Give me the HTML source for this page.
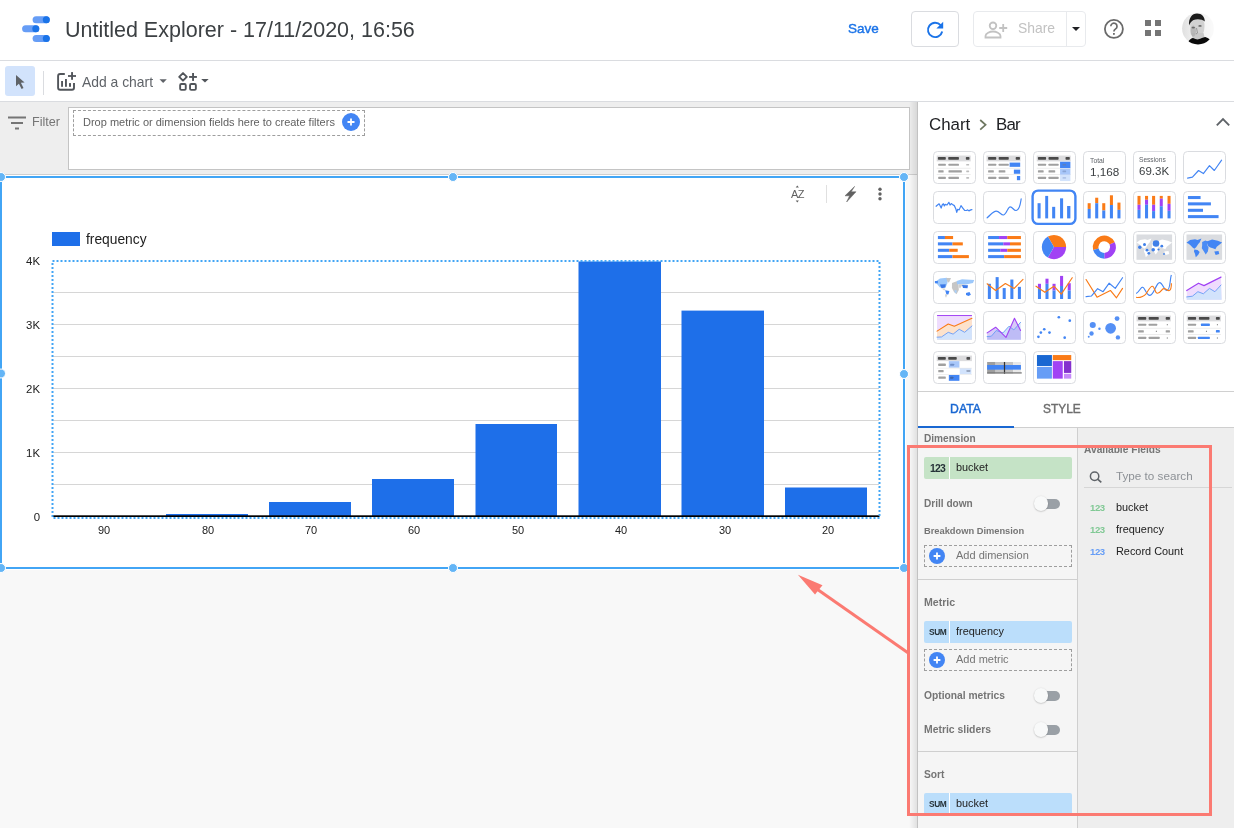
<!DOCTYPE html>
<html><head><meta charset="utf-8">
<style>
*{margin:0;padding:0;box-sizing:border-box}
html,body{width:1234px;height:828px;overflow:hidden;background:#fff;font-family:"Liberation Sans",sans-serif;position:relative}
.a{position:absolute}
.t{position:absolute;line-height:1;white-space:nowrap;will-change:transform}
.b{font-weight:bold}
svg{position:absolute;overflow:visible}
</style></head><body>
<!-- HEADER -->
<div class="a" style="left:0;top:60px;width:1234px;height:1px;background:#dadce0"></div>
<svg style="left:0;top:0" width="60" height="60">
  <rect x="32.6" y="16.2" width="17.2" height="7" rx="3.5" fill="#669df6"/><circle cx="46.3" cy="19.7" r="3.5" fill="#1a73e8"/>
  <rect x="22.1" y="25.2" width="17.2" height="7" rx="3.5" fill="#669df6"/><circle cx="35.8" cy="28.7" r="3.5" fill="#1a73e8"/>
  <rect x="32.6" y="34.9" width="17.2" height="7" rx="3.5" fill="#669df6"/><circle cx="46.3" cy="38.4" r="3.5" fill="#1a73e8"/>
</svg>
<div class="t" style="left:65px;top:19.5px;font-size:21.5px;color:#3c4043">Untitled Explorer - 17/11/2020, 16:56</div>

<div class="t" style="left:847.8px;top:22.4px;font-size:13.5px;color:#1a73e8;-webkit-text-stroke:0.4px #1a73e8">Save</div>
<div class="a" style="left:911px;top:11px;width:48px;height:36px;border:1px solid #dadce0;border-radius:4px"></div>
<svg style="left:0;top:0" width="1" height="1">
  <path d="M940.6 25.2 A7.2 7.2 0 1 0 942.2 31.5" fill="none" stroke="#1a73e8" stroke-width="1.9"/>
  <path d="M943.2 21.8 L943.2 28.6 L936.4 28.6 Z" fill="#1a73e8"/>
</svg>
<div class="a" style="left:973px;top:11px;width:113px;height:36px;border:1px solid #e8eaed;border-radius:4px"></div>
<div class="a" style="left:1066px;top:12px;width:1px;height:34.5px;background:#e8eaed"></div>
<svg style="left:0;top:0" width="1" height="1">
  <circle cx="993" cy="25.8" r="3.3" fill="none" stroke="#c2c2c2" stroke-width="1.8"/>
  <path d="M985.5 37.5 v-1.5 c0-2.8 4.5-4.5 7.5-4.5 s7.5 1.7 7.5 4.5 v1.5 z" fill="none" stroke="#c2c2c2" stroke-width="1.8"/>
  <path d="M1003.2 24v8 M999.2 28h8" stroke="#c2c2c2" stroke-width="1.8"/>
</svg>
<div class="t" style="left:1018px;top:22px;font-size:13.9px;color:#c2c2c2">Share</div>
<svg style="left:0;top:0" width="1" height="1"><path d="M1072 27 h8 l-4 4 z" fill="#202124"/></svg>
<svg style="left:0;top:0" width="1" height="1">
  <circle cx="1113.9" cy="28.9" r="9" fill="none" stroke="#6a6a6a" stroke-width="1.8"/>
  <path d="M1110.8 26.3 a3.1 3.1 0 1 1 4.8 2.6 c-1.2 0.8 -1.7 1.4 -1.7 2.6" fill="none" stroke="#6a6a6a" stroke-width="1.7"/>
  <rect x="1113" y="33" width="1.8" height="1.8" fill="#6a6a6a"/>
</svg>
<svg style="left:0;top:0" width="1" height="1" fill="#757575">
  <rect x="1145" y="20" width="6" height="6"/><rect x="1155" y="20" width="6" height="6"/>
  <rect x="1145" y="30" width="6" height="6"/><rect x="1155" y="30" width="6" height="6"/>
</svg>
<!-- avatar -->
<svg style="left:0;top:0" width="1" height="1">
  <defs><clipPath id="av"><circle cx="1198" cy="28.6" r="15.9"/></clipPath>
  <linearGradient id="avg" x1="0" x2="1"><stop offset="0" stop-color="#dcdcdc"/><stop offset="0.35" stop-color="#efefef"/><stop offset="1" stop-color="#fbfbfb"/></linearGradient></defs>
  <g clip-path="url(#av)">
    <rect x="1180" y="11" width="36" height="36" fill="url(#avg)"/>
    <path d="M1190,24 C1190,20 1194,18.5 1198,18.5 C1202,18.5 1204.5,21 1204.5,25 C1204.5,31 1203,36 1199,38.5 C1196,39.5 1192,37 1191,33 Z" fill="#d2d2d2"/>
    <path d="M1191.5 33 L1193 40 L1205 39 L1203.5 33 Z" fill="#c9c9c9"/><ellipse cx="1193.2" cy="31" rx="2.8" ry="5.5" fill="#9a9a9a" opacity="0.45"/>
    <ellipse cx="1193.3" cy="27.6" rx="1.7" ry="0.9" fill="#6a6a6a"/>
    <ellipse cx="1200" cy="25.9" rx="1.7" ry="0.9" fill="#6a6a6a"/>
    <path d="M1196.5 28 L1197.5 33 L1196 34" fill="none" stroke="#8a8a8a" stroke-width="0.8"/>
    <path d="M1189,25.5 C1188.5,18 1192,13.5 1197,13.5 C1202,13.5 1204.8,17 1204.8,21.5 C1202,19 1197,18.6 1193.5,20 C1191.5,21 1190,23 1189,25.5 Z" fill="#1c1c1c"/>
    <path d="M1185,47 L1188.3,41.4 C1190,39.5 1191.5,38.2 1193,38 C1195,39 1197,39.6 1198.3,39.3 C1201,38.8 1203,37.5 1205.2,37.1 C1207,37.6 1208.5,38.4 1209.6,39.3 L1215,47 Z" fill="#0a0a0a"/>
  </g>
</svg>

<!-- TOOLBAR -->
<div class="a" style="left:0;top:101px;width:1234px;height:1px;background:#dadce0"></div>
<div class="a" style="left:5px;top:66px;width:30px;height:30px;background:#d2e3fc;border-radius:3px"></div>
<svg style="left:0;top:0" width="1" height="1"><path d="M16 75 L16 86.3 L18.9 83.7 L21.6 89 L23.5 88 L20.9 82.8 L24.6 82.6 Z" fill="#5f6368"/></svg>
<div class="a" style="left:43px;top:71px;width:1px;height:24px;background:#dadce0"></div>
<svg style="left:0;top:0" width="1" height="1">
  <path d="M64.8 74 H60.1 a2 2 0 0 0 -2 2 V87.7 a2 2 0 0 0 2 2 H72 a2 2 0 0 0 2 -2 V83.1" fill="none" stroke="#51555a" stroke-width="1.9"/>
  <g fill="#51555a"><rect x="61.1" y="81" width="1.9" height="5.8"/><rect x="65" y="79" width="1.9" height="7.8"/><rect x="69" y="83.1" width="2" height="3.7"/>
  <rect x="71.1" y="72.1" width="1.9" height="7.7"/><rect x="68" y="75.1" width="8" height="1.8"/></g>
</svg>
<div class="t" style="left:82.4px;top:76.1px;font-size:13.9px;color:#5f6368">Add a chart</div>
<svg style="left:0;top:0" width="1" height="1"><path d="M159.5 79.3 h7.3 l-3.65 3.6 z" fill="#5f6368"/></svg>
<svg style="left:0;top:0" width="1" height="1">
  <path d="M183 73.1 L186.8 76.9 L183 80.7 L179.2 76.9 Z" fill="none" stroke="#51555a" stroke-width="1.9" stroke-linejoin="round"/>
  <rect x="180.15" y="84.05" width="5.6" height="5.8" rx="1.2" fill="none" stroke="#51555a" stroke-width="1.9"/>
  <rect x="190.05" y="84.05" width="5.8" height="5.8" rx="1.2" fill="none" stroke="#51555a" stroke-width="1.9"/>
  <g fill="#51555a"><rect x="192.1" y="73" width="1.9" height="7.9"/><rect x="189.1" y="76" width="7.8" height="1.9"/></g>
</svg>
<svg style="left:0;top:0" width="1" height="1"><path d="M201.2 79 h7.5 l-3.75 3.6 z" fill="#51555a"/></svg>

<!-- CANVAS -->
<div class="a" style="left:0;top:102px;width:918px;height:726px;background:#f8f8f8"></div>
<!-- FILTER BAR -->
<div class="a" style="left:0;top:102px;width:918px;height:72px;background:#eeeeee"></div>
<div class="a" style="left:0;top:174px;width:918px;height:1px;background:#cfcfcf"></div>


<svg style="left:0;top:0" width="1" height="1" fill="#757575">
  <rect x="8" y="116.5" width="18" height="2"/><rect x="11" y="122" width="12" height="2"/><rect x="15" y="127.5" width="4" height="2"/>
</svg>
<div class="t" style="left:31.6px;top:116px;font-size:12.6px;color:#757575">Filter</div>
<div class="a" style="left:68px;top:107px;width:842px;height:63px;background:#fff;border:1px solid #c4c4c4"></div>
<div class="a" style="left:73px;top:110px;width:292px;height:26px;border:1px dashed #9e9e9e"></div>
<div class="t" style="left:82.5px;top:116.7px;font-size:11px;color:#616161">Drop metric or dimension fields here to create filters</div>
<svg style="left:0;top:0" width="1" height="1">
  <circle cx="351" cy="122" r="9" fill="#4285f4"/>
  <path d="M351 118.5v7 M347.5 122h7" stroke="#fff" stroke-width="1.8"/>
</svg>
<!-- scroll shadow -->
<div class="a" style="left:909px;top:102px;width:8px;height:726px;background:linear-gradient(to right,rgba(0,0,0,0),rgba(0,0,0,0.09))"></div>

<!-- CHART -->
<div class="a" style="left:0;top:175px;width:906px;height:394.5px;background:#fff"></div>
<!-- gridlines -->
<svg style="left:0;top:0" width="1" height="1">
  <g stroke="#d6d6d6" stroke-width="1">
    <path d="M53 292.5H879 M53 324.5H879 M53 356.5H879 M53 388.5H879 M53 420.5H879 M53 452.5H879 M53 484.5H879"/>
  </g>
  <g fill="#1e6fe9">
    <rect x="166" y="514" width="82" height="2"/>
    <rect x="269" y="502" width="82" height="14"/>
    <rect x="372" y="479" width="82" height="37"/>
    <rect x="475.5" y="424" width="81.5" height="92"/>
    <rect x="578.5" y="261.5" width="82.5" height="254.5"/>
    <rect x="681.5" y="310.6" width="82.5" height="205.4"/>
    <rect x="785" y="487.5" width="82" height="28.5"/>
  </g>
  <rect x="52.5" y="515.3" width="827" height="1.7" fill="#000"/>
  <g stroke="#42a5f5" stroke-width="2" stroke-dasharray="2 2" fill="none">
    <path d="M52.5 261H879.5 V518 H52.5 Z"/>
  </g>
</svg>
<div class="a" style="left:52px;top:232px;width:28px;height:14px;background:#1e6fe9"></div>
<div class="t" style="left:85.6px;top:233px;font-size:13.8px;color:#212121">frequency</div>
<div class="t" style="left:0;width:40px;text-align:right;top:256px;font-size:11.4px;color:#212121">4K</div>
<div class="t" style="left:0;width:40px;text-align:right;top:320px;font-size:11.4px;color:#212121">3K</div>
<div class="t" style="left:0;width:40px;text-align:right;top:384px;font-size:11.4px;color:#212121">2K</div>
<div class="t" style="left:0;width:40px;text-align:right;top:448px;font-size:11.4px;color:#212121">1K</div>
<div class="t" style="left:0;width:40px;text-align:right;top:512.3px;font-size:11.4px;color:#212121">0</div>
<div class="t" style="left:74.2px;width:60px;text-align:center;top:524.8px;font-size:11px;color:#212121">90</div>
<div class="t" style="left:177.6px;width:60px;text-align:center;top:524.8px;font-size:11px;color:#212121">80</div>
<div class="t" style="left:281.0px;width:60px;text-align:center;top:524.8px;font-size:11px;color:#212121">70</div>
<div class="t" style="left:384.4px;width:60px;text-align:center;top:524.8px;font-size:11px;color:#212121">60</div>
<div class="t" style="left:487.8px;width:60px;text-align:center;top:524.8px;font-size:11px;color:#212121">50</div>
<div class="t" style="left:591.2px;width:60px;text-align:center;top:524.8px;font-size:11px;color:#212121">40</div>
<div class="t" style="left:694.6px;width:60px;text-align:center;top:524.8px;font-size:11px;color:#212121">30</div>
<div class="t" style="left:798.0px;width:60px;text-align:center;top:524.8px;font-size:11px;color:#212121">20</div>

<!-- chart toolbar -->
<div class="t" style="left:790.6px;top:189px;font-size:11px;letter-spacing:-0.6px;color:#616161">AZ</div>
<svg style="left:0;top:0" width="1" height="1" fill="#616161">
  <path d="M797.3 185.6 l1.6 1.9 h-3.2 z M797.3 202.4 l1.6 -1.9 h-3.2 z"/>
</svg>
<div class="a" style="left:825.5px;top:185px;width:1px;height:18px;background:#e0e0e0"></div>
<svg style="left:0;top:0" width="1" height="1" fill="#616161">
  <path d="M854.6 186.4 L845 195.8 H849.6 L846.6 202 L856 191.8 H851.2 Z" stroke="#616161" stroke-width="0.5" stroke-linejoin="round"/>
  <circle cx="880" cy="189.2" r="1.7"/><circle cx="880" cy="194" r="1.7"/><circle cx="880" cy="198.8" r="1.7"/>
</svg>
<!-- frame -->
<svg style="left:0;top:0" width="1" height="1">
  <g fill="#42a5f5">
    <rect x="0" y="176" width="905" height="2"/>
    <rect x="0" y="567" width="905" height="2"/>
    <rect x="0" y="176" width="2" height="393"/>
    <rect x="903" y="176" width="2" height="393"/>
  </g>
  <g fill="#64b5f6" stroke="#fff" stroke-width="1">
    <circle cx="1" cy="177" r="4.5"/><circle cx="453" cy="177" r="4.5"/><circle cx="904" cy="177" r="4.5"/>
    <circle cx="1" cy="373.5" r="4.5"/><circle cx="904" cy="374" r="4.5"/>
    <circle cx="1" cy="568" r="4.5"/><circle cx="453" cy="568" r="4.5"/><circle cx="904" cy="568" r="4.5"/>
  </g>
</svg>

<!-- PANEL START -->
<div class="a" style="left:918px;top:102px;width:316px;height:326px;background:#fff"></div>
<div class="a" style="left:917px;top:102px;width:1px;height:726px;background:#c2c2c2"></div>
<div class="t" style="left:928.8px;top:117px;font-size:16.9px;color:#202124">Chart</div>
<svg style="left:0;top:0" width="1" height="1"><path d="M980.2 120 L985.6 124.8 L980.2 129.6" fill="none" stroke="#6d7660" stroke-width="1.7"/></svg>
<div class="t" style="left:995.9px;top:117px;font-size:16.9px;letter-spacing:-0.8px;color:#202124">Bar</div>
<svg style="left:0;top:0" width="1" height="1"><path d="M1216.8 125.4 L1223 119.2 L1229.2 125.4" fill="none" stroke="#5f6368" stroke-width="1.9"/></svg>
<svg style="left:0;top:0" width="1" height="1"><rect x="933.5" y="151.5" width="42" height="32" rx="4" fill="#fff" stroke="#dadce0" stroke-width="1"/><rect x="983.5" y="151.5" width="42" height="32" rx="4" fill="#fff" stroke="#dadce0" stroke-width="1"/><rect x="1033.5" y="151.5" width="42" height="32" rx="4" fill="#fff" stroke="#dadce0" stroke-width="1"/><rect x="1083.5" y="151.5" width="42" height="32" rx="4" fill="#fff" stroke="#dadce0" stroke-width="1"/><rect x="1133.5" y="151.5" width="42" height="32" rx="4" fill="#fff" stroke="#dadce0" stroke-width="1"/><rect x="1183.5" y="151.5" width="42" height="32" rx="4" fill="#fff" stroke="#dadce0" stroke-width="1"/><rect x="933.5" y="191.5" width="42" height="32" rx="4" fill="#fff" stroke="#dadce0" stroke-width="1"/><rect x="983.5" y="191.5" width="42" height="32" rx="4" fill="#fff" stroke="#dadce0" stroke-width="1"/><rect x="1083.5" y="191.5" width="42" height="32" rx="4" fill="#fff" stroke="#dadce0" stroke-width="1"/><rect x="1133.5" y="191.5" width="42" height="32" rx="4" fill="#fff" stroke="#dadce0" stroke-width="1"/><rect x="1183.5" y="191.5" width="42" height="32" rx="4" fill="#fff" stroke="#dadce0" stroke-width="1"/><rect x="933.5" y="231.5" width="42" height="32" rx="4" fill="#fff" stroke="#dadce0" stroke-width="1"/><rect x="983.5" y="231.5" width="42" height="32" rx="4" fill="#fff" stroke="#dadce0" stroke-width="1"/><rect x="1033.5" y="231.5" width="42" height="32" rx="4" fill="#fff" stroke="#dadce0" stroke-width="1"/><rect x="1083.5" y="231.5" width="42" height="32" rx="4" fill="#fff" stroke="#dadce0" stroke-width="1"/><rect x="1133.5" y="231.5" width="42" height="32" rx="4" fill="#fff" stroke="#dadce0" stroke-width="1"/><rect x="1183.5" y="231.5" width="42" height="32" rx="4" fill="#fff" stroke="#dadce0" stroke-width="1"/><rect x="933.5" y="271.5" width="42" height="32" rx="4" fill="#fff" stroke="#dadce0" stroke-width="1"/><rect x="983.5" y="271.5" width="42" height="32" rx="4" fill="#fff" stroke="#dadce0" stroke-width="1"/><rect x="1033.5" y="271.5" width="42" height="32" rx="4" fill="#fff" stroke="#dadce0" stroke-width="1"/><rect x="1083.5" y="271.5" width="42" height="32" rx="4" fill="#fff" stroke="#dadce0" stroke-width="1"/><rect x="1133.5" y="271.5" width="42" height="32" rx="4" fill="#fff" stroke="#dadce0" stroke-width="1"/><rect x="1183.5" y="271.5" width="42" height="32" rx="4" fill="#fff" stroke="#dadce0" stroke-width="1"/><rect x="933.5" y="311.5" width="42" height="32" rx="4" fill="#fff" stroke="#dadce0" stroke-width="1"/><rect x="983.5" y="311.5" width="42" height="32" rx="4" fill="#fff" stroke="#dadce0" stroke-width="1"/><rect x="1033.5" y="311.5" width="42" height="32" rx="4" fill="#fff" stroke="#dadce0" stroke-width="1"/><rect x="1083.5" y="311.5" width="42" height="32" rx="4" fill="#fff" stroke="#dadce0" stroke-width="1"/><rect x="1133.5" y="311.5" width="42" height="32" rx="4" fill="#fff" stroke="#dadce0" stroke-width="1"/><rect x="1183.5" y="311.5" width="42" height="32" rx="4" fill="#fff" stroke="#dadce0" stroke-width="1"/><rect x="933.5" y="351.5" width="42" height="32" rx="4" fill="#fff" stroke="#dadce0" stroke-width="1"/><rect x="983.5" y="351.5" width="42" height="32" rx="4" fill="#fff" stroke="#dadce0" stroke-width="1"/><rect x="1033.5" y="351.5" width="42" height="32" rx="4" fill="#fff" stroke="#dadce0" stroke-width="1"/><rect x="1032.6" y="190.6" width="42.8" height="33.3" rx="5.5" fill="#fff" stroke="#4285f4" stroke-width="2.4"/><g transform="translate(930 148) scale(0.12155)"><rect x="55" y="62" width="280" height="48" fill="#dcdcde" rx="0"/><rect x="65" y="74.0" width="65" height="22.0" fill="#4a4a4a" rx="5.5"/><rect x="150" y="74.0" width="88" height="22.0" fill="#4a4a4a" rx="5.5"/><rect x="295" y="74.0" width="30" height="22.0" fill="#4a4a4a" rx="5.5"/><rect x="68" y="129.0" width="62" height="18.0" fill="#a0a0a0" rx="4.5"/><rect x="152" y="129.0" width="86" height="18.0" fill="#a0a0a0" rx="4.5"/><rect x="298" y="131.0" width="24" height="14.0" fill="#bdbdbd" rx="3.5"/><rect x="68" y="183.0" width="44" height="18.0" fill="#a0a0a0" rx="4.5"/><rect x="152" y="183.0" width="110" height="18.0" fill="#a0a0a0" rx="4.5"/><rect x="298" y="185.0" width="24" height="14.0" fill="#bdbdbd" rx="3.5"/><rect x="68" y="237.0" width="62" height="18.0" fill="#a0a0a0" rx="4.5"/><rect x="152" y="237.0" width="86" height="18.0" fill="#a0a0a0" rx="4.5"/><rect x="298" y="239.0" width="24" height="14.0" fill="#bdbdbd" rx="3.5"/><rect x="55" y="163" width="280" height="6" fill="#e6e6e6" rx="0"/><rect x="55" y="216" width="280" height="6" fill="#e6e6e6" rx="0"/><rect x="465" y="62" width="280" height="48" fill="#dcdcde" rx="0"/><rect x="478" y="74.0" width="67" height="22.0" fill="#4a4a4a" rx="5.5"/><rect x="565" y="74.0" width="83" height="22.0" fill="#4a4a4a" rx="5.5"/><rect x="705" y="74.0" width="35" height="22.0" fill="#4a4a4a" rx="5.5"/><rect x="478" y="129.0" width="67" height="18.0" fill="#a0a0a0" rx="4.5"/><rect x="565" y="129.0" width="83" height="18.0" fill="#a0a0a0" rx="4.5"/><rect x="478" y="183.0" width="47" height="18.0" fill="#a0a0a0" rx="4.5"/><rect x="565" y="183.0" width="55" height="18.0" fill="#a0a0a0" rx="4.5"/><rect x="478" y="237.0" width="67" height="18.0" fill="#a0a0a0" rx="4.5"/><rect x="565" y="237.0" width="83" height="18.0" fill="#a0a0a0" rx="4.5"/><rect x="465" y="163" width="280" height="6" fill="#e6e6e6" rx="0"/><rect x="465" y="216" width="280" height="6" fill="#e6e6e6" rx="0"/><rect x="655" y="120" width="87" height="35" fill="#4285f4" rx="0"/><rect x="690" y="178" width="52" height="34" fill="#4285f4" rx="0"/><rect x="715" y="230" width="27" height="35" fill="#4285f4" rx="0"/><rect x="878" y="62" width="280" height="48" fill="#dcdcde" rx="0"/><rect x="888" y="74.0" width="67" height="22.0" fill="#4a4a4a" rx="5.5"/><rect x="975" y="74.0" width="83" height="22.0" fill="#4a4a4a" rx="5.5"/><rect x="1115" y="74.0" width="35" height="22.0" fill="#4a4a4a" rx="5.5"/><rect x="888" y="129.0" width="67" height="18.0" fill="#a0a0a0" rx="4.5"/><rect x="975" y="129.0" width="83" height="18.0" fill="#a0a0a0" rx="4.5"/><rect x="888" y="183.0" width="47" height="18.0" fill="#a0a0a0" rx="4.5"/><rect x="975" y="183.0" width="55" height="18.0" fill="#a0a0a0" rx="4.5"/><rect x="888" y="237.0" width="67" height="18.0" fill="#a0a0a0" rx="4.5"/><rect x="975" y="237.0" width="83" height="18.0" fill="#a0a0a0" rx="4.5"/><rect x="878" y="163" width="280" height="6" fill="#e6e6e6" rx="0"/><rect x="878" y="216" width="280" height="6" fill="#e6e6e6" rx="0"/><rect x="1070" y="113" width="85" height="52" fill="#4285f4" rx="0"/><rect x="1070" y="170" width="85" height="50" fill="#a8c7fa" rx="0"/><rect x="1070" y="222" width="85" height="50" fill="#d2e3fc" rx="0"/><rect x="1090" y="131.0" width="30" height="14.0" fill="#5a7fc0" rx="3.5"/><rect x="1090" y="185.0" width="30" height="14.0" fill="#8aa6d6" rx="3.5"/><rect x="1090" y="239.0" width="30" height="14.0" fill="#b0c4e8" rx="3.5"/></g><g transform="translate(1080 148) scale(0.12155)"><polyline points="885,248 925,240 975,185 1015,210 1065,145 1105,185 1165,100" fill="none" stroke="#4285f4" stroke-width="9.5" stroke-linejoin="round" stroke-linecap="round"/></g><g transform="translate(930 188) scale(0.12155)"><polyline points="50,150 62,140 75,130 85,150 92,165 100,140 110,130 118,148 125,135 140,140 155,118 165,140 175,128 185,135 200,145 212,170 220,200 228,175 240,180 255,145 270,165 285,185 300,185 310,180 320,188 335,180 345,178" fill="none" stroke="#4285f4" stroke-width="10" stroke-linejoin="round" stroke-linecap="round"/><path d="M470,245 C500,220 520,190 545,190 C570,190 585,225 605,222 C630,215 640,155 660,155 C680,155 690,190 710,185 C740,180 745,120 750,90" fill="none" stroke="#4285f4" stroke-width="9.5" stroke-linecap="round"/><rect x="885" y="125" width="25" height="125" fill="#4285f4" rx="0"/><rect x="948" y="65" width="24" height="185" fill="#4285f4" rx="0"/><rect x="1005" y="155" width="25" height="95" fill="#4285f4" rx="0"/><rect x="1070" y="85" width="25" height="165" fill="#4285f4" rx="0"/><rect x="1128" y="148" width="27" height="102" fill="#4285f4" rx="0"/></g><g transform="translate(1080 188) scale(0.12155)"><rect x="63" y="125" width="25" height="47" fill="#fa7b17" rx="0"/><rect x="63" y="172" width="25" height="78" fill="#4285f4" rx="0"/><rect x="125" y="80" width="25" height="45" fill="#fa7b17" rx="0"/><rect x="125" y="125" width="25" height="125" fill="#4285f4" rx="0"/><rect x="183" y="125" width="25" height="60" fill="#fa7b17" rx="0"/><rect x="183" y="185" width="25" height="65" fill="#4285f4" rx="0"/><rect x="246" y="60" width="25" height="80" fill="#fa7b17" rx="0"/><rect x="246" y="140" width="25" height="110" fill="#4285f4" rx="0"/><rect x="308" y="120" width="25" height="60" fill="#fa7b17" rx="0"/><rect x="308" y="180" width="25" height="70" fill="#4285f4" rx="0"/><rect x="473" y="65" width="25" height="73" fill="#fa7b17" rx="0"/><rect x="473" y="138" width="25" height="42" fill="#a142f4" rx="0"/><rect x="473" y="180" width="25" height="70" fill="#4285f4" rx="0"/><rect x="535" y="65" width="25" height="32" fill="#fa7b17" rx="0"/><rect x="535" y="97" width="25" height="41" fill="#a142f4" rx="0"/><rect x="535" y="138" width="25" height="112" fill="#4285f4" rx="0"/><rect x="593" y="65" width="25" height="73" fill="#fa7b17" rx="0"/><rect x="593" y="138" width="25" height="52" fill="#a142f4" rx="0"/><rect x="593" y="190" width="25" height="60" fill="#4285f4" rx="0"/><rect x="656" y="65" width="25" height="23" fill="#fa7b17" rx="0"/><rect x="656" y="88" width="25" height="62" fill="#a142f4" rx="0"/><rect x="656" y="150" width="25" height="100" fill="#4285f4" rx="0"/><rect x="720" y="65" width="25" height="65" fill="#fa7b17" rx="0"/><rect x="720" y="130" width="25" height="58" fill="#a142f4" rx="0"/><rect x="720" y="188" width="25" height="62" fill="#4285f4" rx="0"/><rect x="888" y="66" width="104" height="25" fill="#4285f4" rx="0"/><rect x="888" y="118" width="189" height="25" fill="#4285f4" rx="0"/><rect x="888" y="171" width="124" height="25" fill="#4285f4" rx="0"/><rect x="888" y="223" width="252" height="25" fill="#4285f4" rx="0"/></g><g transform="translate(930 228) scale(0.12155)"><rect x="65" y="66" width="58" height="25" fill="#4285f4" rx="0"/><rect x="123" y="66" width="67" height="25" fill="#fa7b17" rx="0"/><rect x="65" y="118" width="120" height="25" fill="#4285f4" rx="0"/><rect x="185" y="118" width="85" height="25" fill="#fa7b17" rx="0"/><rect x="65" y="171" width="93" height="25" fill="#4285f4" rx="0"/><rect x="158" y="171" width="70" height="25" fill="#fa7b17" rx="0"/><rect x="65" y="223" width="120" height="25" fill="#4285f4" rx="0"/><rect x="185" y="223" width="135" height="25" fill="#fa7b17" rx="0"/><rect x="478" y="66" width="90" height="25" fill="#4285f4" rx="0"/><rect x="568" y="66" width="68" height="25" fill="#a142f4" rx="0"/><rect x="636" y="66" width="112" height="25" fill="#fa7b17" rx="0"/><rect x="478" y="118" width="125" height="25" fill="#4285f4" rx="0"/><rect x="603" y="118" width="55" height="25" fill="#a142f4" rx="0"/><rect x="658" y="118" width="90" height="25" fill="#fa7b17" rx="0"/><rect x="478" y="171" width="100" height="25" fill="#4285f4" rx="0"/><rect x="578" y="171" width="58" height="25" fill="#a142f4" rx="0"/><rect x="636" y="171" width="112" height="25" fill="#fa7b17" rx="0"/><rect x="478" y="223" width="132" height="25" fill="#4285f4" rx="0"/><rect x="610" y="223" width="0" height="25" fill="#a142f4" rx="0"/><rect x="610" y="223" width="138" height="25" fill="#fa7b17" rx="0"/><path d="M1020,157 L970.0,70.4 A100,100 0 0 1 1120.0,157.0 Z" fill="#fa7b17"/><path d="M1020,157 L1120.0,157.0 A100,100 0 0 1 970.0,243.6 Z" fill="#a142f4"/><path d="M1020,157 L970.0,243.6 A100,100 0 0 1 970.0,70.4 Z" fill="#4285f4"/></g><g transform="translate(1080 228) scale(0.12155)"><path d="M130.9,175.5 A71.5,71.5 0 0 1 264.8,126.8" fill="none" stroke="#fa7b17" stroke-width="47"/><path d="M264.8,126.8 A71.5,71.5 0 0 1 200.0,228.5" fill="none" stroke="#a142f4" stroke-width="47"/><path d="M200.0,228.5 A71.5,71.5 0 0 1 130.9,175.5" fill="none" stroke="#4285f4" stroke-width="47"/></g><g transform="translate(930 268) scale(0.12155)"><rect x="476" y="130" width="25" height="125" fill="#4285f4" rx="0"/><rect x="540" y="75" width="25" height="180" fill="#4285f4" rx="0"/><rect x="598" y="165" width="25" height="90" fill="#4285f4" rx="0"/><rect x="661" y="95" width="25" height="160" fill="#4285f4" rx="0"/><rect x="723" y="155" width="25" height="100" fill="#4285f4" rx="0"/><polyline points="470,130 540,185 620,128 693,168 765,93" fill="none" stroke="#fa7b17" stroke-width="9.5" stroke-linejoin="round" stroke-linecap="round"/><rect x="888" y="130" width="25" height="35" fill="#a142f4" rx="0"/><rect x="888" y="165" width="25" height="90" fill="#4285f4" rx="0"/><rect x="950" y="88" width="25" height="42" fill="#a142f4" rx="0"/><rect x="950" y="130" width="25" height="125" fill="#4285f4" rx="0"/><rect x="1008" y="130" width="25" height="55" fill="#a142f4" rx="0"/><rect x="1008" y="185" width="25" height="70" fill="#4285f4" rx="0"/><rect x="1070" y="65" width="25" height="83" fill="#a142f4" rx="0"/><rect x="1070" y="148" width="25" height="107" fill="#4285f4" rx="0"/><rect x="1133" y="125" width="25" height="60" fill="#a142f4" rx="0"/><rect x="1133" y="185" width="25" height="70" fill="#4285f4" rx="0"/><polyline points="872,150 945,200 1020,150 1080,215 1170,80" fill="none" stroke="#fa7b17" stroke-width="9.5" stroke-linejoin="round" stroke-linecap="round"/></g><g transform="translate(1080 268) scale(0.12155)"><polyline points="50,95 140,240 250,185 300,245 350,168" fill="none" stroke="#fa7b17" stroke-width="9.5" stroke-linejoin="round" stroke-linecap="round"/><polyline points="50,235 95,230 145,170 190,195 240,125 290,168 350,80" fill="none" stroke="#4285f4" stroke-width="9.5" stroke-linejoin="round" stroke-linecap="round"/><path d="M462,210 C490,195 500,155 515,158 C535,160 545,225 575,225 C610,225 625,120 655,120 C680,120 690,185 715,185 C745,185 740,80 752,58" fill="none" stroke="#4285f4" stroke-width="9.5"/><path d="M462,242 C500,245 520,240 545,210 C570,170 580,150 595,150 C615,150 615,205 635,208 C665,210 670,170 690,170 C710,170 720,190 735,185 C750,180 752,140 752,125" fill="none" stroke="#fa7b17" stroke-width="9.5"/><polygon points="878,185 975,125 1020,145 1160,75 1165,262 878,262" fill="#efdcfd"/><polygon points="878,238 925,232 970,195 1015,212 1065,168 1110,195 1160,140 1165,262 878,262" fill="#d2e3fc"/><polyline points="878,185 975,125 1020,145 1160,75" fill="none" stroke="#a142f4" stroke-width="10" stroke-linejoin="round" stroke-linecap="round"/><polyline points="878,238 925,232 970,195 1015,212 1065,168 1110,195 1160,140" fill="none" stroke="#6fa0f6" stroke-width="8" stroke-linejoin="round" stroke-linecap="round"/></g><g transform="translate(930 308) scale(0.12155)"><rect x="58" y="62" width="287" height="200" fill="#efdcfd" rx="0"/><polygon points="58,190 150,132 200,150 345,85 345,262 58,262" fill="#fde2cc"/><polygon points="58,240 95,238 150,200 190,215 240,175 285,200 345,148 345,262 58,262" fill="#d2e3fc"/><rect x="58" y="58" width="287" height="8" fill="#a142f4" rx="0"/><polyline points="58,190 150,132 200,150 345,85" fill="none" stroke="#fa7b17" stroke-width="9" stroke-linejoin="round" stroke-linecap="round"/><polyline points="58,240 95,238 150,200 190,215 240,175 285,200 345,148" fill="none" stroke="#6fa0f6" stroke-width="8" stroke-linejoin="round" stroke-linecap="round"/><polygon points="470,235 505,232 545,185 600,205 650,150 690,180 745,118 748,262 470,262" fill="#d2e3fc"/><polygon points="470,205 540,158 625,242 695,85 748,185 748,262 470,262" fill="#a78bf0" fill-opacity="0.45"/><polyline points="470,235 505,232 545,185 600,205 650,150 690,180 745,118" fill="none" stroke="#6fa0f6" stroke-width="8" stroke-linejoin="round" stroke-linecap="round"/><polyline points="470,205 540,158 625,242 695,85 745,185" fill="none" stroke="#a142f4" stroke-width="9" stroke-linejoin="round" stroke-linecap="round"/><circle cx="892" cy="237" r="11" fill="#4285f4"/><circle cx="912" cy="202" r="11" fill="#4285f4"/><circle cx="940" cy="175" r="11" fill="#4285f4"/><circle cx="983" cy="202" r="11" fill="#4285f4"/><circle cx="1060" cy="76" r="11" fill="#4285f4"/><circle cx="1150" cy="104" r="11" fill="#4285f4"/><circle cx="1108" cy="244" r="11" fill="#4285f4"/></g><g transform="translate(1080 308) scale(0.12155)"><circle cx="105" cy="140" r="25" fill="#5590f5"/><circle cx="160" cy="170" r="10" fill="#5590f5"/><circle cx="95" cy="210" r="18" fill="#5590f5"/><circle cx="72" cy="237" r="8" fill="#5590f5"/><circle cx="252" cy="167" r="44" fill="#5590f5"/><circle cx="305" cy="87" r="20" fill="#5590f5"/><circle cx="312" cy="242" r="18" fill="#5590f5"/><rect x="465" y="62" width="283" height="48" fill="#dcdcde" rx="0"/><rect x="478" y="74.0" width="67" height="22.0" fill="#4a4a4a" rx="5.5"/><rect x="565" y="74.0" width="83" height="22.0" fill="#4a4a4a" rx="5.5"/><rect x="705" y="74.0" width="35" height="22.0" fill="#4a4a4a" rx="5.5"/><rect x="478" y="129.0" width="67" height="18.0" fill="#a0a0a0" rx="4.5"/><rect x="565" y="129.0" width="70" height="18.0" fill="#a0a0a0" rx="4.5"/><rect x="714" y="134.0" width="8" height="8.0" fill="#555" rx="2.0"/><rect x="478" y="183.0" width="47" height="18.0" fill="#a0a0a0" rx="4.5"/><rect x="624" y="188.0" width="8" height="8.0" fill="#555" rx="2.0"/><rect x="705" y="183.0" width="35" height="18.0" fill="#a0a0a0" rx="4.5"/><rect x="478" y="237.0" width="67" height="18.0" fill="#a0a0a0" rx="4.5"/><rect x="565" y="237.0" width="90" height="18.0" fill="#a0a0a0" rx="4.5"/><rect x="714" y="242.0" width="8" height="8.0" fill="#555" rx="2.0"/><rect x="465" y="163" width="283" height="6" fill="#e6e6e6" rx="0"/><rect x="465" y="216" width="283" height="6" fill="#e6e6e6" rx="0"/><rect x="878" y="62" width="282" height="48" fill="#dcdcde" rx="0"/><rect x="888" y="74.0" width="67" height="22.0" fill="#4a4a4a" rx="5.5"/><rect x="978" y="74.0" width="87" height="22.0" fill="#4a4a4a" rx="5.5"/><rect x="1118" y="74.0" width="32" height="22.0" fill="#4a4a4a" rx="5.5"/><rect x="888" y="129.0" width="67" height="18.0" fill="#a0a0a0" rx="4.5"/><rect x="995" y="128.0" width="73" height="20.0" fill="#4285f4" rx="5.0"/><rect x="1126" y="134.0" width="8" height="8.0" fill="#555" rx="2.0"/><rect x="888" y="183.0" width="47" height="18.0" fill="#a0a0a0" rx="4.5"/><rect x="1036" y="188.0" width="8" height="8.0" fill="#555" rx="2.0"/><rect x="1118" y="182.0" width="32" height="20.0" fill="#4285f4" rx="5.0"/><rect x="888" y="237.0" width="67" height="18.0" fill="#a0a0a0" rx="4.5"/><rect x="970" y="236.0" width="98" height="20.0" fill="#4285f4" rx="5.0"/><rect x="1126" y="242.0" width="8" height="8.0" fill="#555" rx="2.0"/><rect x="878" y="163" width="282" height="6" fill="#e6e6e6" rx="0"/><rect x="878" y="216" width="282" height="6" fill="#e6e6e6" rx="0"/></g><g transform="translate(930 348) scale(0.12155)"><rect x="55" y="62" width="290" height="46" fill="#dcdcde" rx="0"/><rect x="65" y="74.0" width="65" height="22.0" fill="#4a4a4a" rx="5.5"/><rect x="150" y="74.0" width="70" height="22.0" fill="#4a4a4a" rx="5.5"/><rect x="300" y="74.0" width="30" height="22.0" fill="#4a4a4a" rx="5.5"/><rect x="155" y="108" width="87" height="54" fill="#a8c7fa" rx="0"/><rect x="245" y="165" width="95" height="50" fill="#d2e3fc" rx="0"/><rect x="155" y="222" width="87" height="48" fill="#4285f4" rx="0"/><rect x="68" y="128.0" width="62" height="20.0" fill="#a0a0a0" rx="5.0"/><rect x="68" y="180.0" width="44" height="20.0" fill="#a0a0a0" rx="5.0"/><rect x="68" y="234.0" width="62" height="20.0" fill="#a0a0a0" rx="5.0"/><rect x="165" y="130.0" width="33" height="16.0" fill="#6f8fc8" rx="4.0"/><rect x="300" y="182.0" width="32" height="16.0" fill="#9aa8c0" rx="4.0"/><rect x="165" y="236.0" width="27" height="16.0" fill="#3f64a8" rx="4.0"/><rect x="55" y="163" width="290" height="5" fill="#e6e6e6" rx="0"/><rect x="55" y="216" width="290" height="5" fill="#e6e6e6" rx="0"/><rect x="470" y="115" width="70" height="95" fill="#9e9e9e" rx="0"/><rect x="540" y="115" width="145" height="95" fill="#c4c4c4" rx="0"/><rect x="685" y="115" width="63" height="95" fill="#e8e8e8" rx="0"/><rect x="470" y="140" width="278" height="38" fill="#4285f4" rx="0"/><rect x="608" y="115" width="10" height="97" fill="#333" rx="0"/><rect x="470" y="200" width="285" height="10" fill="#777" rx="0"/><rect x="880" y="58" width="123" height="90" fill="#1967d2" rx="0"/><rect x="880" y="155" width="123" height="97" fill="#669df6" rx="0"/><rect x="1010" y="58" width="152" height="42" fill="#fa7b17" rx="0"/><rect x="1010" y="108" width="82" height="144" fill="#a142f4" rx="0"/><rect x="1102" y="108" width="60" height="97" fill="#8430ce" rx="0"/><rect x="1102" y="212" width="60" height="40" fill="#c58af9" rx="0"/></g><rect x="1136.5" y="234.5" width="35.6" height="25.3" fill="#dadce0"/><path d="M1136.50,242.85 L1140.06,240.07 L1145.04,239.31 L1147.54,240.07 L1151.45,238.55 L1149.67,242.60 L1148.25,244.11 L1146.11,247.15 L1144.33,248.67 L1142.55,247.40 L1140.42,245.13 L1138.64,243.86 Z" fill="#fff"/><path d="M1144.33,249.43 L1147.54,249.93 L1149.67,251.96 L1148.25,254.74 L1145.76,257.27 L1145.04,253.98 L1143.98,251.45 Z" fill="#fff"/><path d="M1152.16,242.09 L1155.37,240.57 L1157.86,241.58 L1157.15,245.13 L1158.57,247.40 L1157.86,251.45 L1155.72,254.49 L1153.94,251.45 L1151.81,248.16 L1152.16,245.38 Z" fill="#fff"/><path d="M1156.79,241.58 L1162.13,239.56 L1167.83,240.82 L1172.10,242.60 L1169.61,244.62 L1166.76,246.64 L1165.34,249.17 L1162.84,248.16 L1160.35,247.40 L1157.86,245.88 Z" fill="#fff"/><path d="M1164.27,251.45 L1168.54,250.94 L1169.25,253.98 L1165.69,254.99 Z" fill="#fff"/><circle cx="1139.8" cy="247.3" r="1.7" fill="#3f7fe8"/><circle cx="1144.5" cy="244.5" r="1.5" fill="#3f7fe8"/><circle cx="1156" cy="243.5" r="3.3" fill="#3f7fe8"/><circle cx="1147" cy="250.2" r="1.4" fill="#3f7fe8"/><circle cx="1153.2" cy="249.8" r="1.8" fill="#3f7fe8"/><circle cx="1148.8" cy="253.3" r="1.4" fill="#3f7fe8"/><circle cx="1161.8" cy="246.2" r="1.4" fill="#3f7fe8"/><circle cx="1158.5" cy="249.5" r="1.1" fill="#3f7fe8"/><circle cx="1164" cy="254" r="0.9" fill="#3f7fe8"/><rect x="1186.5" y="234.5" width="35.6" height="25.3" fill="#dadce0"/><path d="M1186.50,242.85 L1190.06,240.07 L1195.04,239.31 L1197.54,240.07 L1201.45,238.55 L1199.67,242.60 L1198.25,244.11 L1196.11,247.15 L1194.33,248.67 L1192.55,247.40 L1190.42,245.13 L1188.64,243.86 Z" fill="#4285f4"/><path d="M1194.33,249.43 L1197.54,249.93 L1199.67,251.96 L1198.25,254.74 L1195.76,257.27 L1195.04,253.98 L1193.98,251.45 Z" fill="#4285f4"/><path d="M1202.16,242.09 L1205.37,240.57 L1207.86,241.58 L1207.15,245.13 L1208.57,247.40 L1207.86,251.45 L1205.72,254.49 L1203.94,251.45 L1201.81,248.16 L1202.16,245.38 Z" fill="#4a8cf5"/><path d="M1206.79,241.58 L1212.13,239.56 L1217.83,240.82 L1222.10,242.60 L1219.61,244.62 L1216.76,246.64 L1215.34,249.17 L1212.84,248.16 L1210.35,247.40 L1207.86,245.88 Z" fill="#4285f4"/><path d="M1214.27,251.45 L1218.54,250.94 L1219.25,253.98 L1215.69,254.99 Z" fill="#4285f4"/><polygon points="934.9,282 940,278.5 947,277.7 947.5,283 945.6,287.4 939.9,287.4 937,284" fill="#9cc8fb"/><polygon points="934.9,281 937.9,281 937.9,283.3 934.9,283.3" fill="#4285f4"/><polygon points="939.9,284.6 945.8,284.3 945.3,287.4 941.5,288.2" fill="#3b78e7"/><polygon points="946.2,278 951,277.9 949,282.6 947.5,282" fill="#c6c6c6"/><polygon points="942,288 945,288.5 945.4,290.5 943,290" fill="#dadada"/><polygon points="945.2,290.3 949.4,291 948.5,294.3 946.5,294.8" fill="#4285f4"/><polygon points="945.3,294 947.5,294.5 946,297.8 945,296" fill="#d4d4d4"/><polygon points="952,283 956.7,281.3 958.5,285 958.8,290 956.5,294.3 954,292 951.9,288" fill="#c6c6c6"/><polygon points="954.5,290 956.8,290.5 956.3,293.2 954.8,292.6" fill="#a8d0fb"/><polygon points="956.7,281 962,279.2 974.2,280 973,283 966,284.4 957,284.2" fill="#9cc8fb"/><polygon points="958.5,284.2 966,284.4 962,285.5 960,288.5 958.8,287" fill="#cfcfcf"/><polygon points="962,285 968,285.3 967.5,288.3 963,288" fill="#3b78e7"/><polygon points="966,293 969.5,291.9 970.9,294.8 968.5,296 966,295" fill="#4285f4"/></svg>
<div class="t" style="left:1089.5px;top:158px;font-size:6.8px;color:#5f6368">Total</div>
<div class="t" style="left:1089.7px;top:166px;font-size:11.7px;color:#3c4043">1,168</div>
<div class="t" style="left:1139.2px;top:157.1px;font-size:6.6px;color:#5f6368">Sessions</div>
<div class="t" style="left:1139.2px;top:166px;font-size:11.5px;color:#3c4043">69.3K</div>
<div class="a" style="left:918px;top:391px;width:316px;height:1px;background:#d0d0d0"></div>
<div class="t" style="left:950.4px;top:402.6px;font-size:12.2px;letter-spacing:0.1px;color:#1967d2;-webkit-text-stroke:0.45px #1967d2">DATA</div>
<div class="t" style="left:1043.4px;top:403.6px;font-size:11.9px;color:#6e6e6e;-webkit-text-stroke:0.4px #6e6e6e">STYLE</div>
<div class="a" style="left:918px;top:427px;width:316px;height:1px;background:#cfcfcf"></div>
<div class="a" style="left:918px;top:426px;width:96px;height:2px;background:#1967d2"></div>
<!-- data panes -->
<div class="a" style="left:918px;top:428px;width:159px;height:400px;background:#f5f5f5"></div>
<div class="a" style="left:1077px;top:428px;width:1px;height:400px;background:#cfcfcf"></div>
<div class="a" style="left:1078px;top:428px;width:156px;height:400px;background:#eeeeee"></div>
<div class="t b" style="left:924.4px;top:434.4px;font-size:10.1px;color:#757575">Dimension</div>
<div class="a" style="left:924px;top:457px;width:148px;height:22px;background:#c5e3c6;border-radius:2px"></div>
<div class="a" style="left:949px;top:457px;width:1px;height:22px;background:#fff"></div>
<div class="t b" style="left:929.5px;top:463.6px;font-size:10.4px;letter-spacing:-0.8px;color:#263238">123</div>
<div class="t" style="left:956.3px;top:462.0px;font-size:10.9px;color:#212121">bucket</div>
<div class="t b" style="left:924.4px;top:498.7px;font-size:10.1px;color:#757575">Drill down</div>
<div class="a" style="left:1035px;top:499px;width:25px;height:10px;border-radius:5px;background:#9aa0a6"></div>
<div class="a" style="left:1033.8px;top:496.4px;width:14.4px;height:14.4px;border-radius:50%;background:#f8f9f9;box-shadow:0 0.6px 1.6px rgba(0,0,0,.28)"></div>
<div class="t b" style="left:924.4px;top:527.1px;font-size:9.3px;color:#757575">Breakdown Dimension</div>
<div class="a" style="left:924px;top:545px;width:148px;height:22px;border:1px dashed #9e9e9e"></div>
<svg style="left:0;top:0" width="1" height="1"><circle cx="937" cy="556" r="8" fill="#4285f4"/><path d="M937 552.6v6.8 M933.6 556h6.8" stroke="#fff" stroke-width="1.8"/></svg>
<div class="t" style="left:956px;top:549.5px;font-size:11px;color:#757575">Add dimension</div>
<div class="a" style="left:918px;top:579px;width:159px;height:1px;background:#cfcfcf"></div>
<div class="t b" style="left:924.4px;top:597.2px;font-size:10.6px;color:#757575">Metric</div>
<div class="a" style="left:924px;top:621px;width:148px;height:22px;background:#bbdefb;border-radius:2px"></div>
<div class="a" style="left:949px;top:621px;width:1px;height:22px;background:#fff"></div>
<div class="t b" style="left:928.6px;top:627.9px;font-size:8.4px;letter-spacing:-0.4px;color:#263238">SUM</div>
<div class="t" style="left:956.3px;top:626.0px;font-size:10.9px;color:#212121">frequency</div>
<div class="a" style="left:924px;top:649px;width:148px;height:22px;border:1px dashed #9e9e9e"></div>
<svg style="left:0;top:0" width="1" height="1"><circle cx="937" cy="660" r="8" fill="#4285f4"/><path d="M937 656.6v6.8 M933.6 660h6.8" stroke="#fff" stroke-width="1.8"/></svg>
<div class="t" style="left:956px;top:653.5px;font-size:11px;color:#757575">Add metric</div>
<div class="t b" style="left:924.4px;top:691.3px;font-size:10.25px;color:#757575">Optional metrics</div>
<div class="a" style="left:1035px;top:691px;width:25px;height:10px;border-radius:5px;background:#9aa0a6"></div>
<div class="a" style="left:1033.8px;top:688.4px;width:14.4px;height:14.4px;border-radius:50%;background:#f8f9f9;box-shadow:0 0.6px 1.6px rgba(0,0,0,.28)"></div>
<div class="t b" style="left:924.3px;top:725.0px;font-size:10.4px;color:#757575">Metric sliders</div>
<div class="a" style="left:1035px;top:725px;width:25px;height:10px;border-radius:5px;background:#9aa0a6"></div>
<div class="a" style="left:1033.8px;top:722.4px;width:14.4px;height:14.4px;border-radius:50%;background:#f8f9f9;box-shadow:0 0.6px 1.6px rgba(0,0,0,.28)"></div>
<div class="a" style="left:918px;top:751px;width:159px;height:1px;background:#cfcfcf"></div>
<div class="t b" style="left:924.3px;top:770.3px;font-size:10.25px;color:#757575">Sort</div>
<div class="a" style="left:924px;top:793px;width:148px;height:22px;background:#bbdefb;border-radius:2px"></div>
<div class="a" style="left:949px;top:793px;width:1px;height:22px;background:#fff"></div>
<div class="t b" style="left:928.6px;top:799.9px;font-size:8.4px;letter-spacing:-0.4px;color:#263238">SUM</div>
<div class="t" style="left:956.3px;top:798.0px;font-size:10.9px;color:#212121">bucket</div>
<div class="t b" style="left:1084.3px;top:445.1px;font-size:10.2px;color:#757575">Available Fields</div>
<svg style="left:0;top:0" width="1" height="1"><circle cx="1094.6" cy="476.2" r="4.2" fill="none" stroke="#5f6368" stroke-width="1.5"/><path d="M1097.6 479.2 L1101.3 482.3" stroke="#5f6368" stroke-width="1.7"/></svg>
<div class="t" style="left:1116.4px;top:470.3px;font-size:11.7px;color:#8d9196">Type to search</div>
<div class="a" style="left:1084px;top:487px;width:148px;height:1px;background:#d6d6d6"></div>
<div class="t b" style="left:1090px;top:503.4px;font-size:9.6px;letter-spacing:-0.4px;color:#81c995">123</div>
<div class="t" style="left:1116.4px;top:502.0px;font-size:10.9px;color:#212121">bucket</div>
<div class="t b" style="left:1090px;top:525.4px;font-size:9.6px;letter-spacing:-0.4px;color:#81c995">123</div>
<div class="t" style="left:1116.4px;top:524.0px;font-size:10.9px;color:#212121">frequency</div>
<div class="t b" style="left:1090px;top:547.4px;font-size:9.6px;letter-spacing:-0.4px;color:#669df6">123</div>
<div class="t" style="left:1116.4px;top:546.0px;font-size:10.9px;color:#212121">Record Count</div>
<div class="a" style="left:907px;top:444.5px;width:304.6px;height:371px;border:3px solid #fb7a72"></div>
<svg style="left:0;top:0" width="1" height="1">
 <path d="M909 653.5 L814 587" stroke="#fb7a72" stroke-width="3"/>
 <path d="M797.9 574.7 L822.5 585.3 L815 594.5 Z" fill="#fb7a72"/>
</svg>
<!-- PANEL END -->
</body></html>
